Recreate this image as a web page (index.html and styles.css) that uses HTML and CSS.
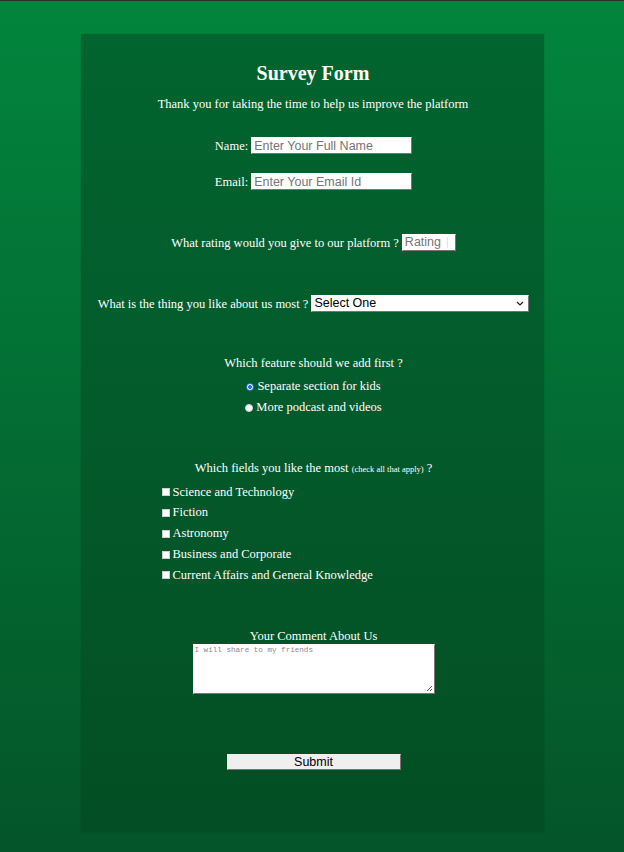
FILE: index.html
```html
<!DOCTYPE html>
<html lang="en">
<head>
<meta charset="utf-8">
<title>Survey Form</title>
<link rel="stylesheet" href="styles.css">
</head>
<body>
<main class="card">
  <h1 class="title">Survey Form</h1>
  <p class="lead">Thank you for taking the time to help us improve the platform</p>
  <form class="form">
    <div class="row row-name">
      <label for="name">Name:</label>
      <input id="name" class="field field-text" type="text" placeholder="Enter Your Full Name">
    </div>
    <div class="row row-email">
      <label for="email">Email:</label>
      <input id="email" class="field field-text" type="email" placeholder="Enter Your Email Id">
    </div>
    <div class="row row-rating">
      <label for="rating">What rating would you give to our platform ?</label>
      <span class="field field-rating"><span class="ph">Rating</span><span class="caret"></span></span>
    </div>
    <div class="row row-select">
      <label for="like">What is the thing you like about us most ?</label>
      <span class="field field-select" id="like">Select One
        <svg class="chev" width="8" height="5" viewBox="0 0 8 5"><path d="M1 1l3 3 3-3" fill="none" stroke="#222" stroke-width="1.2"/></svg>
      </span>
    </div>
    <p class="question q-feature">Which feature should we add first ?</p>
    <div class="radios">
      <label class="opt"><span class="radio checked"></span>Separate section for kids</label>
      <label class="opt"><span class="radio"></span>More podcast and videos</label>
    </div>
    <p class="question q-fields">Which fields you like the most <small class="hint">(check all that apply)</small> ?</p>
    <div class="checks">
      <label class="opt"><span class="check"></span>Science and Technology</label>
      <label class="opt"><span class="check"></span>Fiction</label>
      <label class="opt"><span class="check"></span>Astronomy</label>
      <label class="opt"><span class="check"></span>Business and Corporate</label>
      <label class="opt"><span class="check"></span>Current Affairs and General Knowledge</label>
    </div>
    <p class="question q-comment">Your Comment About Us</p>
    <div class="area">
      <span class="area-ph">I will share to my friends</span>
      <svg class="grip" width="7" height="7" viewBox="0 0 7 7"><path d="M6 1L1 6M6 4L4 6" stroke="#555" stroke-width="1"/></svg>
    </div>
    <div class="submit-wrap"><span class="submit">Submit</span></div>
  </form>
</main>
</body>
</html>
```

FILE: styles.css
```css
html, body {
  margin: 0;
  padding: 0;
}
body {
  min-height: 851px;
  border-top: 1px solid #2e2e2e;
  background: linear-gradient(180deg, #02853d 0%, #036a31 55%, #04552a 100%);
  font-family: "Liberation Serif", "Times New Roman", serif;
  color: #ffffff;
  font-size: 12.5px;
}
.card {
  box-sizing: border-box;
  width: 463px;
  height: 798px;
  margin: 33px auto 0;
  padding: 27px 0 0;
  background: linear-gradient(180deg, #02642f 0%, #035a2b 50%, #034e24 100%);
  box-shadow: 0 0 1px rgba(0, 0, 0, 0.25);
  text-align: center;
}
.title {
  margin: 0;
  font-size: 20px;
  line-height: 24px;
  font-weight: bold;
  padding-left: 2px;
}
.lead {
  margin: 11px 0 0;
  line-height: 16px;
  padding-left: 2px;
}
.form {
  display: flex;
  flex-direction: column;
  align-items: center;
  padding-left: 3px;
}
.row {
  display: flex;
  justify-content: center;
  align-items: center;
  gap: 3px;
  height: 17px;
  line-height: 16px;
}
.row-name { margin-top: 25px; }
.row-email { margin-top: 19px; }
.row-rating { margin-top: 44px; }
.row-select { margin-top: 44px; }
.field {
  box-sizing: border-box;
  height: 17px;
  background: #ffffff;
  border: 1px solid;
  border-color: #ffffff #767676 #767676 #ffffff;
  font-family: "Liberation Sans", Arial, sans-serif;
  font-size: 12.5px;
  line-height: 15px;
  padding: 0 2px;
  color: #000;
  text-align: left;
}
.field-text {
  width: 161px;
  outline: none;
}
.field-text::placeholder {
  color: #757575;
}
.field-rating {
  display: flex;
  align-items: center;
  width: 54px;
  color: #757575;
}
.caret {
  width: 1px;
  height: 11px;
  margin-left: 6px;
  background: #e4e4e4;
}
.field-select {
  position: relative;
  width: 218px;
  color: #000;
}
.chev {
  position: absolute;
  right: 4px;
  top: 5px;
}
.question {
  margin: 0;
  line-height: 16px;
}
.q-feature { margin-top: 43px; }
.q-fields { margin-top: 42px; }
.q-comment { margin-top: 42.5px; }
.hint {
  font-size: 8.5px;
}
.radios {
  margin-top: 5px;
  display: flex;
  flex-direction: column;
  align-items: center;
}
.opt {
  display: flex;
  align-items: center;
  height: 21px;
  line-height: 21px;
}
.radio {
  box-sizing: border-box;
  width: 8px;
  height: 8px;
  margin-right: 3px;
  border-radius: 50%;
  background: #ffffff;
  border: 1px solid #d8d8d8;
}
.radio.checked {
  border: 1px solid #1a73e8;
  background: radial-gradient(circle, #1a73e8 0 1.8px, #ffffff 2.2px);
}
.checks {
  align-self: stretch;
  margin-top: 4.5px;
  padding-left: 78px;
  display: flex;
  flex-direction: column;
  align-items: flex-start;
}
.checks .opt {
  height: 20.75px;
  line-height: 20.75px;
}
.check {
  box-sizing: border-box;
  width: 8px;
  height: 8px;
  margin-right: 3px;
  margin-top: 1px;
  background: #ffffff;
  border: 1px solid #d0d0d0;
}
.area {
  position: relative;
  box-sizing: border-box;
  width: 242px;
  height: 50px;
  background: #ffffff;
  border: 1px solid;
  border-color: #ffffff #767676 #767676 #ffffff;
  padding: 1px 1px;
  text-align: left;
}
.area-ph {
  display: block;
  font-family: "Liberation Mono", "Courier New", monospace;
  font-size: 7.6px;
  line-height: 9px;
  color: #8a8a8a;
}
.grip {
  position: absolute;
  right: 1px;
  bottom: 1px;
}
.submit-wrap {
  margin-top: 60px;
}
.submit {
  box-sizing: border-box;
  display: block;
  width: 174px;
  height: 16px;
  background: #efefef;
  border: 1px solid;
  border-color: #efefef #767676 #767676 #efefef;
  font-family: "Liberation Sans", Arial, sans-serif;
  font-size: 12.5px;
  line-height: 14px;
  color: #000;
  text-align: center;
}
```
